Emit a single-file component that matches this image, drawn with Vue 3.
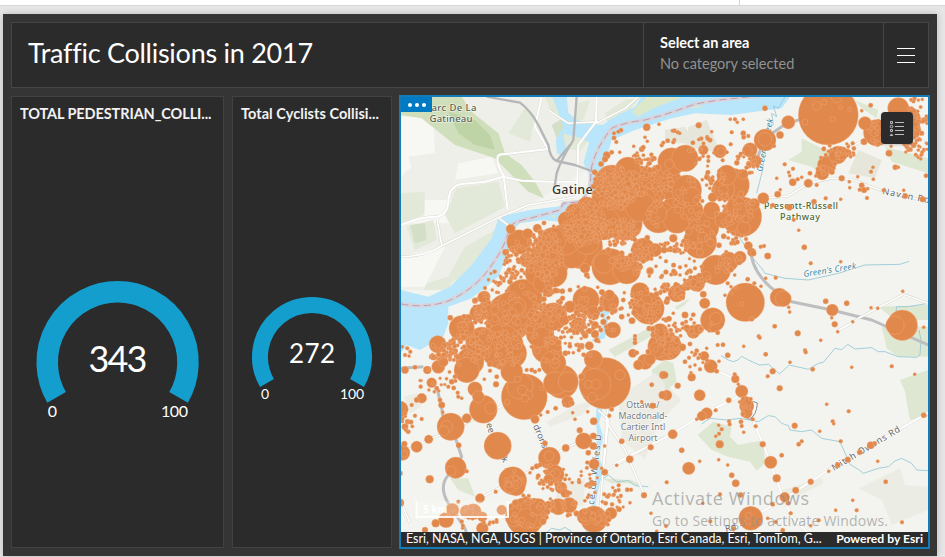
<script setup>
// Incident layers are stored per map tile: origin in map pixels, data at 3x resolution (x, y, radius).
const tiles = [
  { x: 395, y: 90, data: `755 112 11,792 103 5,372 456 37,367 457 7,347 417 14,398 431 16,332 487 10,427 415 13,447 399 7,476 409 5,635 196 11,650 187 7,674 187 5,630 208 9,618 222 8,657 144 7,664 156 6,670 125 6,678 121 7,657 130 6,716 169 5,745 172 7,740 178 8,757 154 5,750 142 5,727 213 8,760 208 6,772 203 6,800 166 6,805 158 6,599 247 8,610 256 9,268 620 18,270 594 6,240 632 9,166 683 8,250 660 9,575 555 8,580 562 5,608 592 5,765 543 9,783 529 5,763 558 5,797 562 5,335 510 7,342 498 6,305 607 5,292 600 5,315 580 7,325 570 6,310 586 5,685 630 7,680 655 6,700 675 5,688 608 5,550 590 5,525 600 7,660 465 6,640 480 8,680 490 8,345 575 8,355 560 9` },
  { x: 665, y: 90, data: `490 75 90,455 48 13,478 37 8,526 52 6,554 58 6,503 87 8,420 97 9,515 22 16,635 128 40,628 128 12,625 105 8,700 55 32,725 90 42,738 120 30,617 46 7,590 62 5,600 100 20,597 155 10,563 160 6,370 97 20,345 135 11,327 168 6,300 55 8,101 106 9,210 88 6,196 88 5,235 88 5,217 97 5,140 125 5,28 122 7,38 127 6,44 130 5,22 122 5,200 127 6,235 130 8,236 142 7,250 138 6,197 163 6,185 187 6,130 200 6,130 213 6,8 152 7,28 150 6,25 157 6,173 211 6,243 447 6,265 490 9,308 498 10,287 470 6,297 468 6,162 466 8,176 439 8,190 425 5,204 450 6,200 460 7,10 480 6,35 480 9,50 465 6,62 480 6,230 642 7,343 622 28,355 626 24,371 652 5,374 666 5,302 565 5,332 563 6,268 580 6,288 589 5,248 568 7,209 555 5,188 580 6,198 590 5,215 595 5,502 660 18,500 683 5,482 634 8,545 640 8,618 653 5,638 655 5,713 604 5,485 225 28,472 250 20,480 240 13,518 195 27,530 190 20,550 188 10,430 280 13,383 277 11,338 313 10,346 299 5,335 265 5,359 223 6,384 236 6,371 247 5,374 257 5,398 268 6,410 262 5,435 250 7,452 258 5,458 237 6,455 285 6,530 265 9,553 275 5,554 293 5,590 286 8,597 300 9,584 299 6,608 296 5,606 324 6,618 245 6,624 232 5,625 268 5,578 260 5,672 190 10,691 232 8,700 232 5,656 301 6,716 301 5,721 318 8,773 328 9,783 257 7,527 328 5,482 325 6,447 335 8,373 352 10,323 346 7,386 389 6,401 421 5,418 472 8,437 520 6,527 515 5,493 350 6,5 635 9,180 616 5,200 610 5,75 542 7,65 550 6,30 550 8,45 555 5,90 535 6` },
  { x: 395, y: 320, data: `388 230 69,375 198 39,367 178 10,398 225 15,390 235 11,382 210 14,440 205 6,337 247 8,265 268 42,287 264 18,630 190 77,600 193 48,602 193 14,580 193 12,592 232 14,675 165 15,167 320 41,155 320 18,146 332 15,308 377 41,182 443 32,168 453 15,240 207 22,250 230 18,215 150 38,225 125 42,145 125 15,128 73 26,110 188 15,97 150 12,130 140 20,110 110 8,250 65 38,320 80 66,350 100 45,455 85 45,475 130 38,480 130 15,350 155 33,500 185 50,480 190 35,520 185 30,518 245 18,530 250 8,595 118 28,560 170 10,583 77 13,548 75 7,560 77 8,543 75 5,535 98 5,566 104 7,585 105 6,420 298 13,437 285 5,458 276 6,482 265 7,508 255 5,540 298 5,533 278 5,578 275 5,596 304 11,554 331 9,566 363 25,595 348 10,595 378 11,580 398 8,597 432 16,620 445 5,629 457 10,590 490 9,215 295 14,191 376 8,101 358 13,65 380 17,22 398 23,28 372 9,15 460 8,15 548 12,28 402 10,15 268 25,215 454 6,104 478 12,140 255 10,135 240 7,143 277 5,80 235 15,65 240 8,50 255 6,60 287 6,80 297 6,30 320 10,38 305 8,40 335 7,30 150 11,60 142 7,46 95 6,37 85 6,30 105 6,42 108 5,22 80 5,353 482 42,363 500 28,350 485 15,365 490 15,345 500 18,463 414 33,462 408 15,480 463 28,482 460 14,498 503 18,510 520 13,412 445 6,425 439 8,435 435 7,512 384 11,450 370 8,390 590 57,415 580 45,430 560 25,360 590 30,395 595 30,490 560 25,523 556 23,540 550 8,460 555 12,570 585 20,597 598 40,570 590 24,648 580 18,672 568 8,633 610 7,632 550 7,622 545 5,255 535 14,215 575 20,235 575 24,172 570 20,153 600 23,122 610 12,90 630 9,262 625 18,262 590 15,320 570 15,190 545 6,302 515 6,285 607 5,295 607 6,305 605 6,405 458 5,382 475 5,435 490 7,446 492 6,460 477 14,510 478 6,467 490 8,680 364 8,704 418 11,767 382 9,747 526 9,665 436 5,705 548 5,628 523 6,642 525 6,655 525 6,661 513 6,671 496 6,671 510 6,697 509 7,708 509 6,643 287 6,650 268 7,768 580 5,785 634 5,629 378 5,720 48 6,720 58 6,720 68 7,713 100 13,725 98 7,750 125 23,765 118 17,730 135 15,800 80 42,785 90 23,760 95 8,805 165 12,770 194 7,803 225 12,740 245 5,773 257 9,303 193 9,305 170 7,285 152 6,268 178 5,160 200 6,125 205 7,118 215 5,188 218 6,190 230 6,200 235 5,170 185 8,180 170 7,395 150 6,410 150 7,420 155 6,433 150 6` },
  { x: 665, y: 320, data: `712 16 46,690 16 28,65 23 10,100 28 15,80 35 9,52 82 11,10 80 40,118 108 14,100 114 6,137 139 20,155 154 7,162 124 5,95 92 7,125 85 5,158 75 6,174 74 7,158 38 7,188 106 8,236 79 5,281 49 6,284 53 6,329 19 7,302 103 7,398 40 9,467 61 5,420 91 6,422 97 6,375 127 5,443 148 7,323 154 9,308 169 6,344 205 9,560 142 5,680 139 6,749 163 5,509 13 9,518 35 5,563 5 5,776 22 5,80 172 12,0 165 10,38 197 9,5 226 16,104 226 17,211 177 12,209 163 6,220 193 5,230 214 19,191 241 8,242 247 18,245 258 22,245 278 17,257 237 6,228 305 7,230 318 6,236 337 5,263 298 6,272 319 6,125 280 17,110 288 14,152 271 6,95 298 5,192 304 6,194 313 6,161 316 5,170 328 6,162 341 6,152 349 5,164 373 12,23 343 14,50 391 8,71 445 19,104 424 5,161 419 5,188 435 5,200 466 8,212 490 11,5 487 6,293 373 9,317 427 19,350 406 7,335 475 12,389 317 9,464 334 5,410 364 6,401 373 7,485 253 5,551 274 6,503 304 6,506 311 5,527 364 6,548 419 9,518 435 8,491 454 5,437 485 9,392 511 10,359 532 15,323 553 7,369 550 7,377 580 6,257 595 36,252 587 10,250 602 11,136 604 6,205 627 7,227 525 8,165 523 6,353 631 7,332 606 6,308 595 5,584 397 8,617 376 11,630 370 6,638 424 5,776 286 8,662 485 7,563 541 5,575 571 6,512 571 5,711 607 6,437 617 5,461 601 6,113 550 5,3 618 6,60 125 7,75 140 5,90 135 5,78 158 5,105 148 6,72 113 6,75 72 7` },
  { x: 560, y: 110, data: `204 180 39,335 155 42,375 145 40,328 163 14,430 120 15,480 124 20,484 125 12,570 120 22,562 122 15,615 90 33,615 88 20,587 152 17,500 195 30,518 225 50,490 238 34,490 240 15,550 193 15,458 262 14,380 240 45,395 260 28,295 320 49,290 310 30,240 290 45,200 230 48,250 220 50,150 270 55,155 215 50,80 290 30,45 310 30,90 350 50,80 395 38,20 400 60,35 430 45,130 340 50,195 340 52,270 240 50,320 220 48,350 330 40,355 300 50,425 350 52,420 395 50,428 382 15,400 300 30,455 300 25,490 330 25,545 320 60,530 290 30,582 282 17,610 265 17,551 355 20,540 300 20,250 420 36,285 420 20,230 430 14,150 470 55,200 480 42,130 460 30,75 475 15,270 483 11,565 407 13,575 427 13,540 442 19,505 455 30,467 480 45,437 500 16,410 520 25,350 550 26,400 520 13,265 595 48,260 575 20,262 600 14,260 595 8,240 545 28,78 570 40,70 575 15,147 575 30,148 555 16,100 608 20,55 645 23,158 660 24,300 665 25,400 665 20,458 630 37,467 625 18,434 580 16,430 553 10,556 577 58,575 628 7,262 383 8,340 385 12,330 418 8,312 420 10,380 410 9,370 395 7,318 454 6,360 472 6,345 490 7,305 502 5,392 485 6,425 470 6,340 610 5,375 615 10,400 614 7,378 635 6,345 640 5,216 632 10,210 580 6,185 620 8,105 645 11,105 672 12,30 590 18,40 620 9,12 630 16,370 530 8` },
  { x: 420, y: 210, data: `440 30 26,400 90 38,355 95 12,482 110 66,390 150 60,420 120 56,435 90 45,350 190 35,320 150 22,310 265 57,305 228 8,270 320 72,270 280 35,290 290 28,293 295 18,340 340 20,190 262 17,175 310 26,200 300 28,240 310 40,220 330 18,125 355 38,128 350 16,130 345 9,230 363 20,185 385 34,360 370 42,400 320 42,370 220 30,400 190 42,385 245 16,145 325 12` },
]

// Neighbourhood clusters: centre, extent, count, smallest and largest radius (map pixels).
const clusters = [
  [615, 188, 22, 22, 150, 1.7, 3], [584, 223, 22, 23, 150, 1.7, 3.2], [650, 183, 24, 17, 80, 1.7, 3.4],
  [658, 214, 13, 12, 14, 1.7, 4], [690, 200, 15, 22, 25, 1.8, 3.4], [618, 232, 21, 14, 85, 1.6, 2.8],
  [544, 255, 20, 25, 120, 1.7, 3.2], [627, 262, 17, 13, 40, 1.7, 3.2], [734, 208, 20, 22, 32, 1.8, 3.6],
  [698, 235, 15, 18, 20, 1.8, 4], [714, 180, 14, 12, 22, 1.7, 2.6], [520, 312, 27, 22, 45, 1.8, 4],
  [550, 305, 18, 22, 42, 1.8, 3.2], [550, 345, 20, 22, 32, 1.8, 3.2], [465, 350, 23, 16, 60, 1.6, 3],
  [500, 350, 24, 18, 58, 1.7, 3.2], [475, 326, 17, 18, 38, 1.6, 3], [646, 250, 16, 10, 18, 1.7, 3.2],
  [646, 304, 16, 20, 36, 1.7, 3], [598, 302, 25, 20, 26, 1.8, 3.2], [580, 326, 17, 13, 40, 1.6, 2.6],
  [598, 331, 16, 12, 12, 1.7, 3], [676, 265, 20, 17, 14, 1.5, 2.5], [675, 247, 22, 4, 20, 1.6, 2.6],
  [673, 292, 17, 8, 26, 1.6, 3], [696, 282, 14, 9, 22, 1.7, 3.2], [725, 262, 16, 11, 16, 1.8, 3.4],
  [695, 326, 18, 10, 12, 1.6, 3], [665, 330, 20, 12, 30, 1.6, 3], [667, 345, 13, 12, 26, 1.7, 3.2],
  [745, 162, 15, 12, 22, 1.6, 2.7], [703, 152, 14, 16, 16, 1.5, 2.5], [644, 158, 13, 7, 16, 1.6, 2.5],
  [735, 238, 10, 8, 8, 1.6, 2.6], [894, 132, 26, 16, 58, 1.6, 3], [916, 116, 12, 20, 38, 1.6, 2.5],
  [917, 149, 12, 11, 34, 1.5, 2.1], [840, 151, 17, 8, 24, 1.6, 2.5], [827, 165, 8, 12, 8, 1.6, 3],
  [516, 262, 13, 17, 45, 1.5, 2.5], [501, 281, 13, 12, 17, 1.5, 2.3], [483, 304, 9, 12, 12, 1.5, 2.6],
  [435, 380, 25, 13, 14, 1.5, 2.3], [407, 424, 6, 14, 9, 1.5, 2.4], [530, 510, 22, 17, 35, 1.7, 3.6],
  [551, 482, 22, 17, 26, 1.5, 2.5], [588, 480, 10, 20, 19, 1.5, 2.2], [596, 519, 17, 10, 16, 1.7, 3],
  [470, 517, 28, 12, 16, 1.6, 3], [618, 499, 13, 14, 12, 1.5, 2.1], [567, 505, 21, 13, 20, 1.6, 2.8],
  [697, 360, 14, 14, 7, 1.5, 2.2], [744, 406, 6, 10, 10, 1.6, 2.8], [567, 345, 23, 9, 12, 1.5, 2.3],
  [512, 478, 8, 10, 7, 1.8, 3.2], [440, 352, 13, 9, 18, 1.5, 3],
]

let seed = 2017
function random() {
  seed = (seed * 1664525 + 1013904223) >>> 0
  return seed / 4294967296
}

const incidents = []
for (const t of tiles) {
  for (const row of t.data.split(',')) {
    const [x, y, r] = row.trim().split(' ').map(Number)
    incidents.push({ x: t.x + x / 3, y: t.y + y / 3, r: r / 3 })
  }
}
incidents.sort((a, b) => b.r - a.r)
for (const [cx, cy, rx, ry, n, low, high] of clusters) {
  for (let i = 0; i < n; i++) {
    const a = random() * Math.PI * 2
    const d = Math.sqrt(random())
    const k = random()
    incidents.push({ x: cx + Math.cos(a) * d * rx, y: cy + Math.sin(a) * d * ry, r: low + (high - low) * k * k })
  }
}
for (const c of incidents) {
  c.x = +c.x.toFixed(1)
  c.y = +c.y.toFixed(1)
  c.r = +c.r.toFixed(1)
}
</script>

<template>
  <div class="page">
    <div class="topbar"><div class="tab"></div><div class="tab rest"></div></div>
    <main class="dashboard">
      <header class="header">
        <h1 class="title">Traffic Collisions in 2017</h1>
        <div class="selector">
          <div class="selector-label">Select an area</div>
          <div class="selector-value">No category selected</div>
        </div>
        <button class="menu" aria-label="Menu"><i></i><i></i><i></i></button>
      </header>
      <div class="columns">
        <section class="panel pedestrians">
          <h2>TOTAL PEDESTRIAN_COLLI...</h2>
          <svg class="gauge" viewBox="12 97 211 450">
            <path d="M56.600 397.400 A70.400 70.400 0 1 1 178.600 397.400" />
            <text class="big" x="118" y="371.500" textLength="59">343</text>
            <text class="range" x="52.500" y="417">0</text>
            <text class="range" x="174.500" y="417" textLength="27">100</text>
          </svg>
        </section>
        <section class="panel cyclists">
          <h2>Total Cyclists Collisi...</h2>
          <svg class="gauge" viewBox="233 97 158 450">
            <path d="M267 383 A52 52 0 1 1 357 383" />
            <text class="mid" x="312" y="363" textLength="46">272</text>
            <text class="small-range" x="265" y="399">0</text>
            <text class="small-range" x="352" y="399" textLength="24">100</text>
          </svg>
        </section>
        <section class="map">
          <svg class="canvas" viewBox="401 97 527 435">
            <rect x="401" y="97" width="527" height="435" fill="#f3f4ef" />
            <!-- land cover -->
            <g transform="translate(395 90) scale(.33333)">
              <path fill="#eeefe8" d="M18 20H700L590 230 380 360 200 560 160 600H18Z" />
              <path fill="#f7f7f3" d="M18 80L115 80 120 190 40 200 50 230 18 260ZM80 330H180V400H18V360ZM18 500L150 470 90 590H18ZM190 220L290 200 310 250 180 270Z" />
              <path fill="#d0dfbb" d="M18 20H200L230 65 310 130 330 190 380 225 420 275 447 325 400 305 340 245 300 205 180 165 80 85 18 75Z" />
              <path fill="#bfd4a6" d="M160 65L240 90 285 135 300 180 240 165 190 130Z" />
              <path fill="#e2e9d8" d="M18 310L90 305 88 375 18 400ZM185 295L310 275 330 350 180 430 150 375ZM210 470L310 415 250 540 170 575 160 600 85 600 95 580 160 560ZM390 55L420 75 405 155 340 130ZM450 20H510L500 90 465 60ZM480 130L590 100 575 160 555 185 500 170ZM545 40L585 30 565 90 540 95ZM630 70L690 30 740 20 700 65 640 110ZM35 410L115 390 125 450 60 480Z" />
              <path fill="#d3dfc6" d="M45 405L90 400 95 450 60 460ZM470 105L510 80 505 155 485 145Z" />
            </g>
            <g transform="translate(665 90) scale(.33333)">
              <path fill="#e6e6db" d="M70 110L125 90 155 160 175 190 90 175 60 165ZM0 120L60 110 85 160H0ZM580 180L650 210 630 265 550 250Z" />
              <path fill="#dee7d2" d="M410 145L430 155 500 190 515 240 470 255 440 230 370 210 410 185ZM570 30L640 60 635 85 590 55ZM660 170L790 205 790 250 680 215ZM30 650L75 625 60 645 35 660ZM640 650L790 645V690H690Z" />
            </g>
            <g transform="translate(395 320) scale(.33333)">
              <path fill="#dfe7d4" d="M640 90L760 25 785 40 660 110ZM620 475L710 480 745 500 700 490 650 490ZM165 475L220 475 240 530 190 510ZM770 150L810 120V210L775 180Z" />
              <path fill="#ecece5" d="M455 305L545 255 600 240 560 285 465 320ZM670 230L780 160 860 240 790 310 750 420 680 360ZM25 230L65 220 80 260 45 280ZM500 490L570 475 565 560 480 535Z" />
            </g>
            <g transform="translate(665 320) scale(.33333)">
              <path fill="#dee7d2" d="M650 20H790V110L700 110 665 85ZM705 180L790 150V290L735 300 720 215ZM98 345L145 305 200 320 195 350 220 375 295 360 300 430 275 452 255 425 190 410 140 390ZM0 120L25 130 35 185 0 215Z" />
              <path fill="#ebece4" d="M580 505L705 445 720 495 790 500V570L680 615 650 540ZM350 510L470 475 475 490 375 540Z" />
            </g>
            <!-- water -->
            <g transform="translate(395 90) scale(.33333)">
              <path class="water" d="M18 600L100 620 165 590 230 525 290 445 312 380 405 360 500 348 550 330 590 325 580 245 565 220 580 165 605 120 650 85 720 50 740 20H1060L1025 0H1200L1160 55 1080 65 1010 75 900 70 830 85 720 120 650 150 630 220 600 330 490 395 445 390 375 400 345 430 342 480 310 560 230 625 160 650 160 700 145 740 75 780 35 765 18 790Z" />
              <path class="water" d="M473 20H515L520 70 555 95 620 105 660 90 640 145 600 170 560 145 500 130 515 175 505 200 486 190 482 150 505 110Z" />
              <path fill="#dce8c9" d="M710 65L760 15H850L855 25 775 55 730 80ZM885 48L915 47 925 51 890 55ZM470 376L480 377 478 388Z" />
              <path fill="none" stroke="#d7d4de" stroke-width="12" d="M18 642Q90 655 155 635 250 595 300 510 330 470 345 410 355 395 405 385L495 360 505 340 560 335 585 290 590 230Q605 170 650 115 685 98 750 90L805 75 850 60 900 42 970 30 1090 18" />
              <path fill="none" stroke="#b994a4" stroke-width="2.500" stroke-dasharray="22 12" d="M18 642Q90 655 155 635 250 595 300 510 330 470 345 410 355 395 405 385L495 360 505 340 560 335 585 290 590 230Q605 170 650 115 685 98 750 90L805 75 850 60 900 42 970 30 1090 18" />
            </g>
            <g transform="translate(665 90) scale(.33333)" class="stream">
              <path d="M360 20L340 55 325 48 335 80 320 70 325 105 310 90 307 145 300 180 293 240 275 310M215 430L238 465 260 500 290 535 300 550 360 565 430 570 520 550 600 525 705 523 732 514M790 640L730 650 695 650 690 690" />
            </g>
            <g transform="translate(395 320) scale(.33333)">
              <path class="water" d="M605 260L623 270 612 310 625 350 612 410 625 450 612 500 602 550 590 640 570 640 590 560 601 480 600 400 607 350 602 300ZM590 60L615 45 625 -10 640 -5 630 55 595 65ZM605 -30L630 -45 645 -20 620 -5Z" />
              <path class="stream" d="M620 480L640 465 665 485 700 482 720 497 760 500M445 645L470 625 495 630 510 622 530 635" />
            </g>
            <g transform="translate(665 320) scale(.33333)" class="stream">
              <path d="M168 107L190 120 205 125 218 120 230 109 250 120 283 135 311 133 343 162 373 135 430 148 460 130 475 127 510 85 530 89 548 73 570 87 620 83 640 95 660 95 700 110 755 112 765 104 768 60 762 30M110 312L135 295 185 300 225 295 280 305 310 287 330 290 350 310 370 317 375 330 410 335 440 330 470 355 525 365 545 410 555 433 580 448 595 460 640 445 670 440 690 423 710 415 740 430 755 450 790 452" />
            </g>
            <!-- roads -->
            <g transform="translate(395 90) scale(.33333)">
              <path class="road-case" d="M18 405Q70 380 125 380 160 375 160 330 165 290 195 283L270 275 325 260 380 272 470 275 545 275M18 500Q90 500 140 468L310 383 400 345 545 320M325 260L310 225Q300 190 325 193L455 178M325 250L338 360M125 380L140 468M440 20L420 110 460 180M605 20L603 95 550 165 545 320M460 60L520 100 610 95M310 383L345 410M345 500L325 560 265 605 235 650M603 100L690 55 730 20" />
              <path class="road" d="M18 405Q70 380 125 380 160 375 160 330 165 290 195 283L270 275 325 260 380 272 470 275 545 275M325 260L310 225Q300 190 325 193L455 178M325 250L338 360M440 20L420 110 460 180M605 20L603 95 550 165 545 320M345 500L325 560 265 605 235 650" />
              <path class="thin-road" d="M18 500Q90 500 140 468L310 383 400 345 545 320M125 380L140 468M460 60L520 100 610 95M310 383L345 410M603 100L690 55 730 20" />
              <path class="highway" d="M275 20L375 38Q405 60 430 105L460 165Q465 205 485 213L540 225 595 245M545 20L535 150Q495 215 485 250L478 295M485 213L525 165" />
            </g>
            <g transform="translate(665 90) scale(.33333)">
              <path class="highway wide" d="M510 45L350 110 300 145 265 235M250 465L265 520Q280 560 320 595L380 635 500 660 620 690 790 765" />
              <path class="road-case" d="M200 350L300 325 370 318 430 280 500 265 560 268 650 302 790 335M560 170L640 125M580 685L655 645 715 613 790 640" />
              <path class="thin-road" d="M200 350L300 325 370 318 430 280 500 265 560 268 650 302 790 335M560 170L640 125M580 685L655 645 715 613 790 640" />
            </g>
            <g transform="translate(395 320) scale(.33333)">
              <path class="highway wide" d="M18 145L85 140M125 200L140 265 145 300 180 350 200 410 160 465Q130 500 160 550L210 625 215 640" />
              <path class="road-case" d="M18 400L110 355 255 290 400 220M255 535L400 455 510 385 590 350M630 300L690 390 750 530M640 240L610 640M625 455L700 415 810 350M18 545L45 610M610 270L640 300 625 455" />
              <path class="thin-road" d="M18 400L110 355 255 290 400 220M255 535L400 455 510 385 590 350M630 300L690 390 750 530M640 240L610 640M625 455L700 415 810 350M18 545L45 610M610 270L640 300 625 455" />
            </g>
            <g transform="translate(665 320) scale(.33333)">
              <path class="road-case" d="M-150 430L25 340 110 285 220 230M130 140L205 175 225 215 250 270 300 385 350 520 380 590 430 640M180 640L360 535 490 450 630 370 790 278M518 33L575 0" />
              <path class="road" d="M-150 430L25 340 110 285 220 230M130 140L205 175 225 215 250 270 300 385 350 520 380 590 430 640M180 640L360 535 490 450 630 370 790 278M518 33L575 0" />
              <path d="M228 250Q225 280 252 298 275 287 277 249L265 245 252 251 240 245Z" fill="#fff" stroke="#85888a" stroke-width="3" />
            </g>
            <!-- place names -->
            <g class="labels">
              <text x="454" y="110.500" text-anchor="middle" class="park" textLength="45">arc De La</text>
              <text x="451" y="122" text-anchor="middle" class="park" textLength="43">Gatineau</text>
              <text x="552" y="194" class="city" textLength="56">Gatineau</text>
              <text x="764" y="209" class="pathway" textLength="74">Prescott-Russell</text>
              <text x="800" y="220" text-anchor="middle" class="pathway" textLength="40">Pathway</text>
              <text class="creek" transform="translate(804 277) rotate(-9)" textLength="53">Green's Creek</text>
              <text class="creek" transform="translate(762 172) rotate(-78)" textLength="54">Green's Creek</text>
              <text class="street" transform="translate(882 194) rotate(11)" textLength="48">Navan Rd</text>
              <text class="street" transform="translate(834 471) rotate(-31)" textLength="78">Mitch Owens Rd</text>
              <g class="airport" text-anchor="middle">
                <text x="643" y="408">Ottawa/</text><text x="643" y="419">Macdonald-</text><text x="643" y="430">Cartier Intl</text><text x="643" y="440.500">Airport</text>
              </g>
              <text class="street" transform="translate(486 424) rotate(72)">ee</text>
              <text class="street" transform="translate(501 459) rotate(60)">k</text>
              <text class="street" transform="translate(533 426) rotate(67)" textLength="25">drons</text>
              <text class="street" transform="translate(594 505) rotate(-84)" textLength="71">ce of Wales D</text>
              <text class="street" transform="translate(726 532) rotate(-15)">Rd</text>
            </g>
            <g class="incidents">
              <circle v-for="(c, i) in incidents" :key="i" :cx="c.x" :cy="c.y" :r="c.r" />
            </g>
            <g class="scale">
              <path d="M416.500 501V517H508V501" />
              <text x="423" y="513">5 km</text>
            </g>
            <g class="watermark">
              <text x="652" y="505" font-size="18" textLength="157">Activate Windows</text>
              <text x="652" y="526" font-size="14" textLength="236">Go to Settings to activate Windows.</text>
            </g>
          </svg>
          <footer class="attribution"><span>Esri, NASA, NGA, USGS | Province of Ontario, Esri Canada, Esri, TomTom, G...</span><strong>Powered by Esri</strong></footer>
          <div class="more"><i></i><i></i><i></i></div>
          <button class="legend" aria-label="Legend">
            <svg width="32" height="32" viewBox="0 0 32 32" fill="none" stroke="#bdbdbd">
              <path d="M14 10.500H23M14 14.500H23M14 18.500H23M14 22.500H23" />
              <path d="M9.500 9.500H11.500V11.500H9.500ZM9.500 17.500H11.500V19.500H9.500ZM9.200 23.500H11.800L10.500 21.800Z" />
              <circle cx="10.500" cy="14.500" r="1.300" />
            </svg>
          </button>
        </section>
      </div>
    </main>
  </div>
</template>

<style>
body { background: #e6e6e6; overflow: hidden; }
</style>

<style scoped>
* { box-sizing: border-box; }
.page { width: 945px; height: 557px; font-family: Lato, "Open Sans", sans-serif; background: #e6e6e6; }
.topbar { height: 6px; display: flex; background: #fff; border-bottom: 1px solid #d8d8d8; }
.tab { width: 740px; border-right: 1px solid #d4d4d4; }
.tab.rest { flex: 1; border: 0; }
.dashboard { margin: 8px 8px 0 3px; height: 542px; padding: 8px; background: #353535; display: flex; flex-direction: column; gap: 8px; box-shadow: 0 0 7px #0003; }
.header { height: 66px; display: flex; border: 1px solid #464646; background: #2b2b2b; color: #fff; flex: none; }
.title { flex: 1; margin: 0; padding: 14px 16px; font-size: 27px; line-height: 32px; font-weight: 400; letter-spacing: -.26px; white-space: nowrap; }
.selector { width: 240px; padding: 9px 16px; border-left: 1px solid #464646; line-height: 21px; white-space: nowrap; }
.selector-label { font-size: 14.5px; font-weight: 700; letter-spacing: -.02px; }
.selector-value { color: #929292; font-size: 14.5px; }
.menu { width: 45px; padding: 1px 0 0; border: 0; border-left: 1px solid #464646; background: none; display: flex; flex-direction: column; align-items: center; justify-content: center; gap: 6px; }
.menu i { width: 18px; height: 1px; background: #fff; }
.columns { display: flex; height: 452px; }
.panel { flex: none; border: 1px solid #424242; background: #2b2b2b; overflow: hidden; }
.pedestrians { width: 213px; margin-right: 8px; }
.cyclists { width: 160px; margin-right: 7px; }
.panel h2 { margin: 0; height: 34px; padding: 7px 8px; color: #f2f2f2; font-size: 14.500px; font-weight: 700; line-height: 20px; white-space: nowrap; letter-spacing: -.1px; }
.cyclists h2 { letter-spacing: .05px; }
.gauge { display: block; width: 100%; height: 450px; margin-top: -34px; }
.gauge path { fill: none; stroke: #149ece; stroke-width: 21.500; }
.cyclists .gauge path { stroke-width: 16; }
.gauge text { fill: #fff; text-anchor: middle; font-family: Lato, sans-serif; }
.gauge .big { font-size: 36px; }
.gauge .mid { font-size: 26px; }
.range { font-size: 16px; }
.small-range { font-size: 14px; }
.map { flex: none; width: 531px; height: 454px; margin-top: -1px; border: 2px solid #147cb8; position: relative; overflow: hidden; background: #2b2b2b; }
.canvas { display: block; width: 527px; height: 435px; }
.attribution { height: 15px; padding: 0 5px; display: flex; justify-content: space-between; color: #fff; font-size: 12.450px; line-height: 14px; white-space: nowrap; }
.attribution strong { font-size: 12.200px; font-weight: 700; }
.more { position: absolute; top: 0; left: 0; width: 31px; height: 15px; background: #007ac2; display: flex; align-items: center; justify-content: center; gap: 3px; }
.more i { width: 4px; height: 4px; border-radius: 50%; background: #fff; }
.legend { position: absolute; left: 480px; top: 15px; width: 32px; height: 32px; padding: 0; border: 0; border-radius: 4px; background: #2b2b2b; box-shadow: 0 1px 3px #0003; }
.legend svg { display: block; }
.water { fill: #b9e6fb; }
.stream { fill: none; stroke: #94c8d5; stroke-width: 2.600; }
.road, .road-case, .thin-road, .highway { fill: none; stroke-linejoin: round; }
.road-case { stroke: #dbdad2; stroke-width: 8; }
.road { stroke: #fff; stroke-width: 6; }
.thin-road { stroke: #fff; stroke-width: 4.500; }
.highway { stroke: #b5b6b8; stroke-width: 7; }
.highway.wide { stroke: #bdbebf; stroke-width: 9; }
.labels { font-family: "Noto Sans", sans-serif; font-size: 9.500px; paint-order: stroke; stroke: #fffc; stroke-width: 1.200px; }
.park { fill: #53604f; font-weight: 500; }
.city { fill: #333; font-size: 12.500px; font-weight: 500; }
.pathway { fill: #4a6a36; font-size: 9px; font-weight: 500; }
.creek { fill: #4387a0; font-style: italic; font-size: 8.500px; }
.street { fill: #666; font-size: 9px; }
.airport { fill: #777c80; font-size: 8.800px; }
.incidents circle { fill: #e1894d; stroke: #f4b48a; stroke-opacity: .6; stroke-width: .6; }
.scale path { fill: #ffffff38; stroke: #ffffffdd; stroke-width: 2; }
.scale text { font: 700 10px "Noto Sans", sans-serif; fill: #fff; }
.watermark { fill: #8e8e8ea6; font-family: "Open Sans", sans-serif; font-weight: 400; }
</style>
